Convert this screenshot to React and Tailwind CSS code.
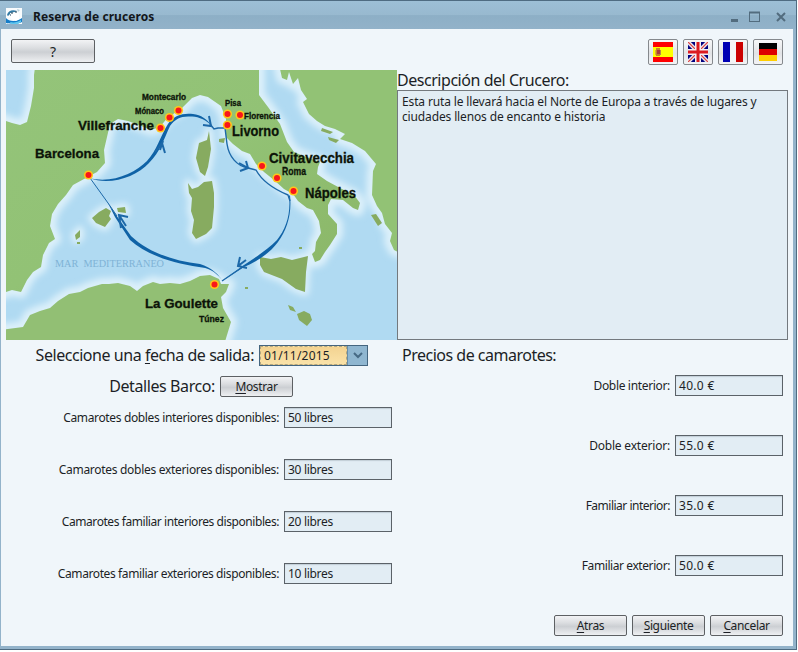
import React from "react";

const land = "#92bf74";
const island = "#87ab60";

const places = [
  { t: "Montecarlo", x: 142, y: 99.5, w: 44, s: 8.5 },
  { t: "Mónaco", x: 135, y: 113.5, w: 29, s: 8.5 },
  { t: "Villefranche", x: 78, y: 130, w: 76, s: 13.5 },
  { t: "Barcelona", x: 35, y: 157.5, w: 64, s: 13.5 },
  { t: "Pisa", x: 225, y: 106, w: 16, s: 8.5 },
  { t: "Florencia", x: 244, y: 119, w: 36, s: 8.5 },
  { t: "Livorno", x: 232, y: 136, w: 47, s: 14 },
  { t: "Civitavecchia", x: 269, y: 163, w: 85, s: 14.5 },
  { t: "Roma", x: 282, y: 175, w: 24, s: 10 },
  { t: "Nápoles", x: 305, y: 198, w: 51, s: 14.5 },
  { t: "La Goulette", x: 145, y: 308, w: 73, s: 13.5 },
  { t: "Túnez", x: 199, y: 322, w: 25, s: 9.5 },
];

const ports = [
  [178.5, 110.5], [169.5, 117.5], [160.5, 128], [227.5, 114], [240, 115], [227.4, 125],
  [262, 166], [277, 178], [293.5, 191], [88.5, 175], [214.5, 284.5],
];

const mainland =
  "M36 60L34 75L34 88L31 106L27 122L20 125L12 123L0 119V294L12 290L21 292L27 280L33 272L41 267L43 255L49 243L55 239L50 226L52 214L58 204L66 195L73 185L84 179L97 172L105 163L104 150L107 137L110 124L118 119L128 121L139 125L151 130L160 127L168 117L180 110L192 98L200 95L208 97L221 106L226 119L226 137L233 144L242 151L250 154L256 164L264 172L274 180L284 189L293 194L298 201L307 208L313 210L319 221L321 233L316 242L315 251L312 254L315 262L320 260L325 252L330 245L337 234L337 224L328 214L328 205L331 199L343 200L353 208L358 210L360 203L354 195L340 188L327 181L317 174L318 167L320 162L306 157L294 152L287 142L280 124L268 107L259 95L259 60Z";
const balkans =
  "M278 60L282 78L287 80L289 72L293 84L298 78L301 90L307 99L303 102L309 114L317 121L325 126L335 129L345 134L340 139L352 143L365 151L376 164L373 171L372 195L377 206L382 213L385 224L392 233L390 241L394 250L398 252V60Z";
const africa =
  "M0 330L23 327L30 315L40 311L50 308L58 301L69 294L80 292L88 288L102 284L109 284L118 283L130 286L137 291L143 286L153 282L160 284L170 283L180 284L190 281L200 276L210 275L219 279L221 284L229 284L226 292L221 297L223 308L231 322L227 335L224 345H0Z";
const islands = [
  "M209 131L211 149L208 167L205 176L200 172L196 158L199 143L207 140Z",
  "M212 181L204 182L198 187L192 189L188 183L189 193L192 198L191 211L194 220L192 233L196 239L206 234L212 228L214 207L214 193Z",
  "M260 257L271 259L281 257L292 260L308 256L306 272L305 292L296 289L282 279L264 272L260 265Z",
  "M92 218L99 212L106 208L111 211L109 216L111 219L105 227L96 223Z",
  "M117 208L125 207L126 213L118 212Z",
  "M75 235L80 230L80 237L76 240Z",
  "M77 242H80V244H77Z",
  "M297 314L304 311L310 314L312 320L307 326L299 320Z",
  "M288 305L293 307L296 312L290 310Z",
  "M219 139L225 138L224 143L219 142Z",
  "M371 215L376 214L382 223L378 226Z",
  "M299 247H302V249H299Z",
  "M245 287H248V289H245Z",
  "M322 128L333 132L330 134L321 131Z",
  "M328 137L339 140L336 143L329 140Z",
];

function RouteMap() {
  return (
    <svg className="block h-[270px] w-[391px] shrink-0" viewBox="6 70 391 270">
      <defs>
        <filter id="foam" x="-10%" y="-10%" width="120%" height="120%">
          <feGaussianBlur stdDeviation="3" />
        </filter>
        <linearGradient id="ground" x1="0" y1="0" x2="1" y2="1">
          <stop offset="0" stopColor="#94c47a" />
          <stop offset="0.5" stopColor="#92c275" />
          <stop offset="1" stopColor="#8ab566" />
        </linearGradient>
      </defs>
      <rect x="6" y="70" width="391" height="270" fill="#b0daf2" />
      <g fill="none" stroke="#dcf0fa" strokeWidth="12" strokeLinejoin="round" filter="url(#foam)">
        <path d={mainland} />
        <path d={balkans} />
        <path d={africa} />
        {islands.slice(0, 6).map((d) => <path key={d} d={d} strokeWidth="8" />)}
      </g>
      <path d={mainland} fill="url(#ground)" />
      <path d={balkans} fill="#92c275" />
      <path d={africa} fill={land} />
      {islands.map((d) => <path key={d} d={d} fill={island} />)}
      <text x="55" y="267" fontSize="10.500" textLength="109" lengthAdjust="spacingAndGlyphs" fill="#7fb3d6" fontFamily="Liberation Serif, serif" className="whitespace-pre">MAR  MEDITERRANEO</text>
      <g fill="#0f62a6">
        <path d="M89 178C112 184 135 173 147 161C157 150 160 137 168 124C174 115 183 113 193 114C201 115 207 119 211 125C204 118 196 116.500 190 116.500C181 116 175 119 170 126C164 139 160 152 149 163C136 177 110 186 89 178Z" />
        <path d="M108 203L116 215L131 236C150 254 176 261 200 264C212 268 217 273 222 280C214 270 208 268 199 267C172 263 147 255 130 240L115 217Z" />
        <path d="M289 196C291 214 286 229 277 240C267 250 256 257 244 265L222 281L244 267C258 261 270 253 278 242C287 230 292 214 290 195Z" />
      </g>
      <g fill="none" stroke="#1c68a8" strokeWidth="1.400">
        <path d="M90 178L108 203L117 216" strokeWidth="1" />
        <path d="M210 124L214 129L218 128L225 128L227 144C229 157 237 166 248 168L256 170C263 183 276 190 288 195L290 201" />
        <path d="M222 281L244 266" />
        <path d="M155 152L162 143L165 153M160 150L163 141M203 125L211 126L209 116M239 163L248 168L240 171M246 161L248 168M121 228L119 215L128 217M119 215L126 226M240 257L238 266L247 268M238 266L246 260" strokeWidth="2" />
      </g>
      {ports.map(([x, y]) => (
        <g key={x}>
          <circle cx={x} cy={y} r="4.600" fill="#ffc61a" />
          <circle cx={x} cy={y} r="3" fill="#f8161b" />
        </g>
      ))}
      {places.map((p) => (
        <text key={p.t} x={p.x} y={p.y} fontSize={p.s} textLength={p.w} lengthAdjust="spacingAndGlyphs" fontFamily="Liberation Sans, sans-serif" fontWeight="700" fill="#0c1408" stroke="#0c1408" strokeWidth="0.300">{p.t}</text>
      ))}
    </svg>
  );
}

const metal =
  "flex items-center justify-center border border-[#5d6063] rounded-[2px] bg-[linear-gradient(#f2f3f5_0%,#dcdee1_35%,#cccfd3_55%,#dfe1e4_80%,#eef0f2_100%)] leading-none";

function Button({ k, rest }) {
  return (
    <button className={`${metal} h-[21px] w-[73px] text-[12px] tracking-[-0.35px]`}>
      <span><span className="underline underline-offset-2">{k}</span>{rest}</span>
    </button>
  );
}

function Field({ label, value, track, valueTrack }) {
  return (
    <div className="flex h-[21px] items-center justify-end gap-[5px] text-[12px]">
      <label className={`whitespace-nowrap ${track}`}>{label}</label>
      <div className={`flex h-[21px] w-[108px] items-center border border-[#5b6268] bg-[#e2edf4] pl-[3px] shadow-[inset_0_1px_1px_#c3ced6] ${valueTrack}`}>{value}</div>
    </div>
  );
}

const flags = {
  es: (
    <svg width="20" height="20" shapeRendering="crispEdges">
      <rect width="20" height="20" fill="#f00" />
      <rect y="5" width="20" height="10" fill="#ff0" />
      <rect x="3" y="6" width="4" height="8" fill="#c98328" />
      <rect x="4" y="8" width="3" height="4" fill="#a83b3b" />
      <rect x="2" y="8" width="1" height="5" fill="#d9b036" />
      <rect x="7" y="8" width="1" height="5" fill="#b5894a" />
    </svg>
  ),
  uk: (
    <svg width="20" height="20">
      <rect width="20" height="20" fill="#00007e" />
      <path d="M0 0L20 20M20 0L0 20" stroke="#e8e4f0" strokeWidth="4" />
      <path d="M0 0L20 20M20 0L0 20" stroke="#e0403c" strokeWidth="1.200" />
      <path d="M10 0V20M0 10H20" stroke="#f4eef4" strokeWidth="6" />
      <path d="M10 0V20M0 10H20" stroke="#dc1a20" strokeWidth="3" />
    </svg>
  ),
  fr: (
    <svg width="20" height="20" shapeRendering="crispEdges">
      <rect width="7" height="20" fill="#0000b4" />
      <rect x="7" width="6" height="20" fill="#f5f5f5" />
      <rect x="13" width="7" height="20" fill="#cc0000" />
    </svg>
  ),
  de: (
    <svg width="18" height="18" shapeRendering="crispEdges">
      <rect width="18" height="6" fill="#000" />
      <rect y="6" width="18" height="6" fill="#dd0000" />
      <rect y="12" width="18" height="6" fill="#ffce00" />
    </svg>
  ),
};

const cabins = [
  ["Camarotes dobles interiores disponibles:", "50 libres", "tracking-[-0.35px]"],
  ["Camarotes dobles exteriores disponibles:", "30 libres", "tracking-[-0.3px]"],
  ["Camarotes familiar interiores disponibles:", "20 libres", "tracking-[-0.43px]"],
  ["Camarotes familiar exteriores disponibles:", "10 libres", "tracking-[-0.39px]"],
];

const prices = [
  ["Doble interior:", "40.0 €", "tracking-[-0.33px]"],
  ["Doble exterior:", "55.0 €", "tracking-[-0.2px]"],
  ["Familiar interior:", "35.0 €", "tracking-[-0.5px]"],
  ["Familiar exterior:", "50.0 €", "tracking-[-0.42px]"],
];

export default function App() {
  return (
    <div className="h-[652px] w-[798px] overflow-hidden bg-white font-['Noto_Sans',sans-serif] text-[#1c1f26]">
      <div className="flex h-[650px] w-[797px] flex-col border-t border-r border-b border-[#4f6c82] bg-[#93b3ca]">
        <header className="flex h-[28px] shrink-0 items-center bg-[linear-gradient(#9dbfd6_0%,#98b9cf_50%,#8dafc6_52%,#92b2c9_100%)] pl-[6px]">
          <svg width="16" height="16" viewBox="0 0 16 16" className="mt-[2px]">
            <rect width="16" height="16" fill="#f8fbfd" />
            <path d="M1 7C2 3 6 1 11 3L9 4L5 5L2 8Z" fill="#347ba5" />
            <path d="M11 1L14 2L12 4Z" fill="#b3d1dc" />
            <path d="M0 10C3 14 11 14 16 10V14C13 16 3 16 0 15Z" fill="#147cc8" />
            <path d="M4 14C8 15 12 14 15 12V14L12 16H5Z" fill="#61c7ee" />
            <path d="M4 5L11 4L13 6L13 11L10 13L5 11Z" fill="#fff" />
            <path d="M5 5H7M9 4H11M4 7H5" stroke="#1f4056" />
          </svg>
          <h1 className="mt-[3px] ml-[11px] flex-1 text-[12px] font-bold tracking-[0.07px] text-[#12161a]">Reserva de cruceros</h1>
          <svg width="60" height="16" viewBox="0 0 60 16" className="mt-[2px] mr-[5px] shrink-0" fill="none" stroke="#526c7e">
            <path d="M0 12.500H7" strokeWidth="3" />
            <rect x="18.500" y="4.500" width="10" height="9" />
            <path d="M18 4.500H29" strokeWidth="2" />
            <path d="M46 5L54 13M54 5L46 13" strokeWidth="2" />
          </svg>
        </header>

        <main className="mr-[3px] mb-[3px] ml-px flex flex-1 flex-col bg-[#f0f6fa] pl-[5px]">
          <div className="flex h-[41px] shrink-0 items-start justify-between pt-[10px] pr-[10px] pl-[5px]">
            <button className={`${metal} h-[24px] w-[84px] pt-[2px] text-[14px]`}>?</button>
            <div className="flex gap-[5px]">
              {Object.keys(flags).map((f) => (
                <button key={f} className="flex h-[26px] w-[30px] items-center justify-center rounded-[2px] border border-[#85898d] bg-[linear-gradient(#f7f8f9,#e1e3e6_55%,#f3f4f6)]">{flags[f]}</button>
              ))}
            </div>
          </div>

          <section className="flex h-[270px] shrink-0">
            <RouteMap />
            <div className="flex w-[391px] flex-col">
              <h2 className="h-[20px] text-[16px] leading-[20px] tracking-[-0.46px] whitespace-nowrap">Descripción del Crucero:</h2>
              <p className="flex-1 border border-[#73797e] bg-[#e2edf4] px-[4px] pt-[3px] text-[12px] leading-[15px] tracking-[-0.14px]">
                Esta ruta le llevará hacia el Norte de Europa a través de lugares y ciudades llenos de encanto e historia
              </p>
            </div>
          </section>

          <section className="flex h-[275px] shrink-0">
            <div className="w-[386px] pt-[5px]">
              <div className="flex h-[21px] items-center justify-end gap-[5px] pr-[24px]">
                <label className="text-[16px] leading-[21px] tracking-[-0.45px] whitespace-nowrap">Seleccione una <span className="underline underline-offset-2">f</span>echa de salida:</label>
                <div className="flex h-[21px] w-[109px] border border-[#44657f]">
                  <div className="flex flex-1 items-center border border-dashed border-[#b3a67f] bg-[linear-gradient(#f3d391,#fae2a8)] pl-[3px] text-[12px] tracking-[0.2px]">01/11/2015</div>
                  <div className="flex w-[20px] items-center justify-center border-l border-[#668da9] bg-[#8fb6d0]">
                    <svg width="10" height="7" viewBox="0 0 10 7" fill="none" stroke="#466984" strokeWidth="2"><path d="M1 1L5 5L9 1" /></svg>
                  </div>
                </div>
              </div>
              <div className="mt-[10px] flex h-[21px] items-center justify-end gap-[5px] pr-[99px]">
                <span className="text-[16px] leading-[21px] tracking-[-0.4px]">Detalles Barco:</span>
                <Button k="M" rest="ostrar" />
              </div>
              <div className="mt-[10px] flex flex-col gap-[31px]">
                {cabins.map(([label, value, track]) => (
                  <Field key={label} label={label} value={value} track={track} valueTrack="tracking-[-0.3px]" />
                ))}
              </div>
            </div>
            <div className="w-[391px] pt-[5px]">
              <h2 className="pl-[10px] text-[16px] leading-[21px] tracking-[-0.5px]">Precios de camarotes:</h2>
              <div className="mt-[9px] flex flex-col gap-[39px]">
                {prices.map(([label, value, track]) => (
                  <Field key={label} label={label} value={value} track={track} valueTrack="tracking-[0.3px]" />
                ))}
              </div>
            </div>
          </section>

          <footer className="flex justify-end gap-[5px] pr-[10px]">
            <Button k="A" rest="tras" />
            <Button k="S" rest="iguiente" />
            <Button k="C" rest="ancelar" />
          </footer>
        </main>
      </div>
    </div>
  );
}
